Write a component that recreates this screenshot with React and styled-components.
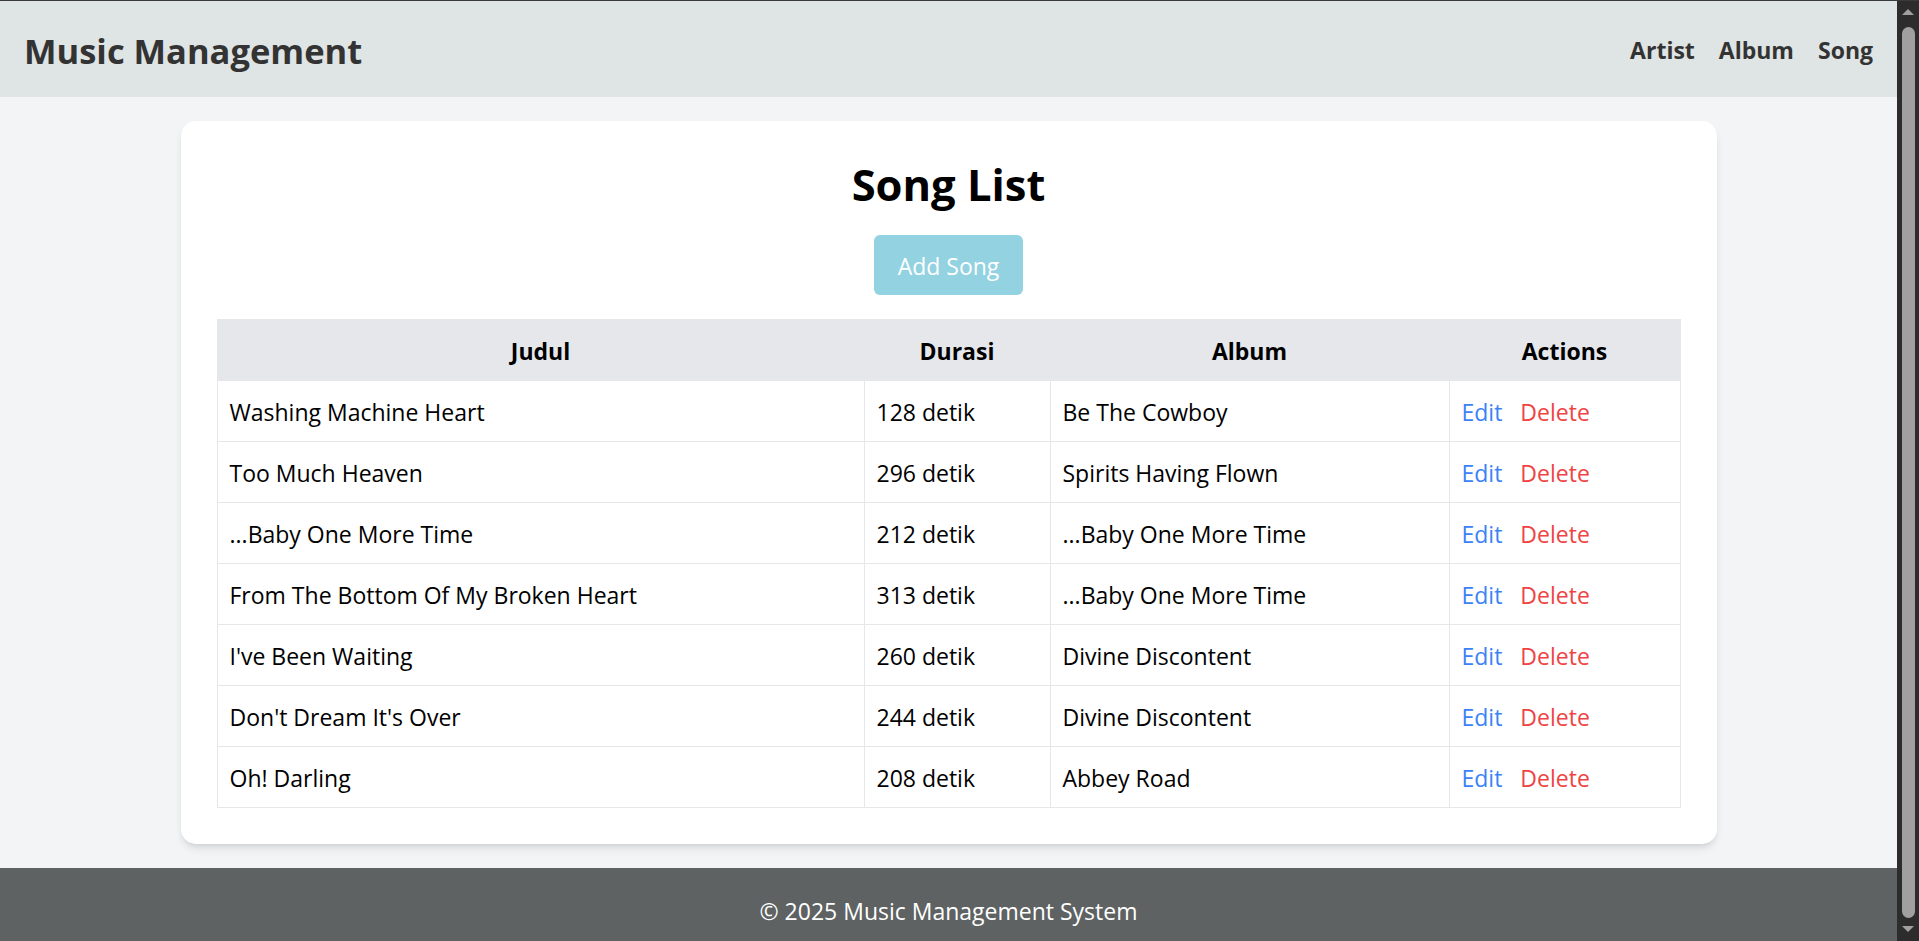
import React from 'react';
import styled, { createGlobalStyle } from 'styled-components';

const GlobalStyle = createGlobalStyle`
  body {
    margin: 0;
    background: #f3f4f6;
    color: #000;
    font-family: 'Open Sans', 'Noto Sans', sans-serif;
  }

  ::-webkit-scrollbar {
    display: none;
  }
`;

const Shell = styled.div`
  display: flex;
  align-items: flex-start;
`;

const Page = styled.div`
  flex: 1;
  min-width: 0;
  display: flex;
  flex-direction: column;
  min-height: 100vh;
`;

// stand-in for the browser's vertical scrollbar seen in the screenshot
const ScrollRail = styled.div`
  position: sticky;
  top: 0;
  flex: none;
  width: 22px;
  height: 100vh;
  box-sizing: border-box;
  padding: 8px 0 9px;
  display: flex;
  flex-direction: column;
  align-items: center;
  background: #2c2c2c;
  border-top: 1px solid #3a3a3a;
`;

const RailArrow = styled.span`
  width: 0;
  height: 0;
  border-left: 6px solid transparent;
  border-right: 6px solid transparent;
  ${(p) => (p.$down ? 'border-top: 6px solid #a0a0a0;' : 'border-bottom: 6px solid #a0a0a0;')}
`;

const RailThumb = styled.span`
  flex: 1;
  width: 13px;
  margin: 12px 0 8px 1px;
  border-radius: 7px;
  background: #a0a0a0;
`;

const Header = styled.header`
  display: flex;
  align-items: center;
  justify-content: space-between;
  padding: 25px 24px 23px;
  background: #dfe4e4;
  border-top: 1px solid #3a3a3a;
`;

const Brand = styled.h1`
  margin: 0;
  padding-top: 2px;
  font-size: 34.5px;
  line-height: 46px;
  font-weight: 700;
  color: #333;
`;

const Nav = styled.nav`
  display: flex;
  gap: 24px;
`;

const NavLink = styled.a`
  font-size: 23px;
  line-height: 36px;
  font-weight: 700;
  color: #333;
  text-decoration: none;
  cursor: pointer;
`;

const Main = styled.main`
  flex: 1;
  padding: 24px;
`;

const Card = styled.section`
  max-width: 1536px;
  margin: 0 auto;
  padding: 36px;
  box-sizing: border-box;
  background: #fff;
  border-radius: 15px;
  box-shadow: 0 6px 10px -2px rgba(0, 0, 0, 0.1), 0 3px 6px -3px rgba(0, 0, 0, 0.1);
`;

const Title = styled.h2`
  margin: 0 0 24px;
  padding-top: 2px;
  text-align: center;
  font-size: 43.5px;
  line-height: 52px;
  font-weight: 700;
`;

const Toolbar = styled.div`
  display: flex;
  justify-content: center;
  margin-bottom: 24px;
`;

const AddButton = styled.button`
  padding: 13px 24px 11px;
  border: 0;
  border-radius: 6px;
  background: #92d2e1;
  color: #fff;
  font-family: inherit;
  font-size: 23px;
  line-height: 36px;
  cursor: pointer;
`;

const Table = styled.table`
  width: 100%;
  border-collapse: collapse;
  table-layout: fixed;
  font-size: 23px;
  line-height: 36px;
`;

const HeadCell = styled.th`
  padding: 13px 12px 11px;
  background: #e5e7eb;
  border: 1px solid #e5e7eb;
  font-weight: 700;
  text-align: center;
`;

const Cell = styled.td`
  padding: 13px 12px 11px;
  border: 1px solid #e5e7eb;
  white-space: nowrap;
`;

const Actions = styled.div`
  display: flex;
  gap: 18px;
`;

const ActionButton = styled.button`
  padding: 0;
  border: 0;
  background: none;
  font-family: inherit;
  font-size: 23px;
  line-height: 36px;
  color: ${(p) => (p.$danger ? '#ef4444' : '#3b82f6')};
  cursor: pointer;
`;

const Footer = styled.footer`
  padding: 25px 24px 23px;
  background: #5e6262;
  color: #fff;
  text-align: center;
  font-size: 23px;
  line-height: 36px;
`;

const songs = [
  { title: 'Washing Machine Heart', duration: 128, album: 'Be The Cowboy' },
  { title: 'Too Much Heaven', duration: 296, album: 'Spirits Having Flown' },
  { title: '...Baby One More Time', duration: 212, album: '...Baby One More Time' },
  { title: 'From The Bottom Of My Broken Heart', duration: 313, album: '...Baby One More Time' },
  { title: "I've Been Waiting", duration: 260, album: 'Divine Discontent' },
  { title: "Don't Dream It's Over", duration: 244, album: 'Divine Discontent' },
  { title: 'Oh! Darling', duration: 208, album: 'Abbey Road' },
];

const App = () => (
  <Shell>
    <GlobalStyle />
    <Page>
      <Header>
        <Brand>Music Management</Brand>
        <Nav>
          <NavLink>Artist</NavLink>
          <NavLink>Album</NavLink>
          <NavLink>Song</NavLink>
        </Nav>
      </Header>

      <Main>
        <Card>
          <Title>Song List</Title>
          <Toolbar>
            <AddButton>Add Song</AddButton>
          </Toolbar>

          <Table>
            <colgroup>
              <col style={{ width: 647 }} />
              <col style={{ width: 186 }} />
              <col style={{ width: 399 }} />
              <col style={{ width: 231 }} />
            </colgroup>
            <thead>
              <tr>
                <HeadCell>Judul</HeadCell>
                <HeadCell>Durasi</HeadCell>
                <HeadCell>Album</HeadCell>
                <HeadCell>Actions</HeadCell>
              </tr>
            </thead>
            <tbody>
              {songs.map((song) => (
                <tr key={song.title}>
                  <Cell>{song.title}</Cell>
                  <Cell>{song.duration} detik</Cell>
                  <Cell>{song.album}</Cell>
                  <Cell>
                    <Actions>
                      <ActionButton>Edit</ActionButton>
                      <ActionButton $danger>Delete</ActionButton>
                    </Actions>
                  </Cell>
                </tr>
              ))}
            </tbody>
          </Table>
        </Card>
      </Main>

      <Footer>© 2025 Music Management System</Footer>
    </Page>

    <ScrollRail aria-hidden="true">
      <RailArrow />
      <RailThumb />
      <RailArrow $down />
    </ScrollRail>
  </Shell>
);

export default App;
